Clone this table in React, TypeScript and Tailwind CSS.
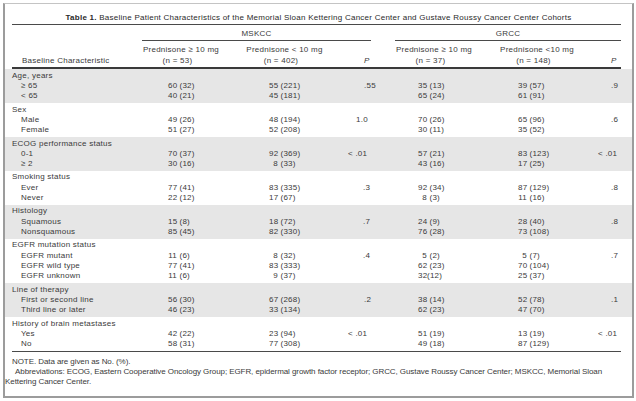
type Row = { name: string; v: string[] };
type Section = {
  label: string;
  shade: boolean;
  rows: Row[];
  p1: string;
  p1Pad: string;
  p2: string;
  p2Pad: string;
};

const sections: Section[] = [
  {
    label: "Age, years",
    shade: true,
    rows: [
      { name: "≥ 65", v: ["60 (32)", "55 (221)", "35 (13)", "39 (57)"] },
      { name: "< 65", v: ["40 (21)", "45 (181)", "65 (24)", "61 (91)"] },
    ],
    p1: ".55",
    p1Pad: "pl-[40px]",
    p2: ".9",
    p2Pad: "pl-[36px]",
  },
  {
    label: "Sex",
    shade: false,
    rows: [
      { name: "Male", v: ["49 (26)", "48 (194)", "70 (26)", "65 (96)"] },
      { name: "Female", v: ["51 (27)", "52 (208)", "30 (11)", "35 (52)"] },
    ],
    p1: "1.0",
    p1Pad: "pl-[32px]",
    p2: ".6",
    p2Pad: "pl-[36px]",
  },
  {
    label: "ECOG performance status",
    shade: true,
    rows: [
      { name: "0-1", v: ["70 (37)", "92 (369)", "57 (21)", "83 (123)"] },
      { name: "≥ 2", v: ["30 (16)", "8 (33)", "43 (16)", "17 (25)"] },
    ],
    p1: "< .01",
    p1Pad: "pl-[24px]",
    p2: "< .01",
    p2Pad: "pl-[23px]",
  },
  {
    label: "Smoking status",
    shade: false,
    rows: [
      { name: "Ever", v: ["77 (41)", "83 (335)", "92 (34)", "87 (129)"] },
      { name: "Never", v: ["22 (12)", "17 (67)", "8 (3)", "11 (16)"] },
    ],
    p1: ".3",
    p1Pad: "pl-[39px]",
    p2: ".8",
    p2Pad: "pl-[36px]",
  },
  {
    label: "Histology",
    shade: true,
    rows: [
      { name: "Squamous", v: ["15 (8)", "18 (72)", "24 (9)", "28 (40)"] },
      { name: "Nonsquamous", v: ["85 (45)", "82 (330)", "76 (28)", "73 (108)"] },
    ],
    p1: ".7",
    p1Pad: "pl-[39px]",
    p2: ".8",
    p2Pad: "pl-[36px]",
  },
  {
    label: "EGFR mutation status",
    shade: false,
    rows: [
      { name: "EGFR mutant", v: ["11 (6)", "8 (32)", "5 (2)", "5 (7)"] },
      { name: "EGFR wild type", v: ["77 (41)", "83 (333)", "62 (23)", "70 (104)"] },
      { name: "EGFR unknown", v: ["11 (6)", "9 (37)", "32(12)", "25 (37)"] },
    ],
    p1: ".4",
    p1Pad: "pl-[39px]",
    p2: ".7",
    p2Pad: "pl-[36px]",
  },
  {
    label: "Line of therapy",
    shade: true,
    rows: [
      { name: "First or second line", v: ["56 (30)", "67 (268)", "38 (14)", "52 (78)"] },
      { name: "Third line or later", v: ["46 (23)", "33 (134)", "62 (23)", "47 (70)"] },
    ],
    p1: ".2",
    p1Pad: "pl-[40px]",
    p2: ".1",
    p2Pad: "pl-[36px]",
  },
  {
    label: "History of brain metastases",
    shade: false,
    rows: [
      { name: "Yes", v: ["42 (22)", "23 (94)", "51 (19)", "13 (19)"] },
      { name: "No", v: ["58 (31)", "77 (308)", "49 (18)", "87 (129)"] },
    ],
    p1: "< .01",
    p1Pad: "pl-[24px]",
    p2: "< .01",
    p2Pad: "pl-[23px]",
  },
];

// count right-aligned so the parentheses line up
const Value = ({ text }: { text: string }) => {
  const i = text.indexOf("(");
  const count = text.slice(0, i).trimEnd();
  const spaced = text[i - 1] === " ";
  return (
    <span className="whitespace-pre">
      <span className="inline-block w-[9px] text-right">{count}</span>
      {spaced ? " " : ""}
      {text.slice(i)}
    </span>
  );
};

const Line = ({
  name,
  indent,
  v,
  p1,
  p1Pad,
  p2,
  p2Pad,
}: {
  name: string;
  indent: boolean;
  v?: string[];
  p1?: string;
  p1Pad?: string;
  p2?: string;
  p2Pad?: string;
}) => (
  <div className="flex h-[10.4px] items-center whitespace-nowrap">
    <div className={`w-[130px] ${indent ? "pl-[9px]" : ""}`}>{name}</div>
    <div className="w-[103px] pl-[26px]">{v && <Value text={v[0]} />}</div>
    <div className="w-[79px] pl-[24px]">{v && <Value text={v[1]} />}</div>
    <div className={`w-[71px] ${p1Pad ?? ""}`}>{p1}</div>
    <div className="w-[104px] pl-[23px]">{v && <Value text={v[2]} />}</div>
    <div className="w-[76px] pl-[19px]">{v && <Value text={v[3]} />}</div>
    <div className={`w-[46px] ${p2Pad ?? ""}`}>{p2}</div>
  </div>
);

const HeadCol = ({ top, n, w }: { top: string; n: string; w: string }) => (
  <div className={`${w} flex flex-col gap-[1px] text-center`}>
    <div className="h-[10px] leading-[10px]">{top}</div>
    <div className="h-[10px] pr-[7px] leading-[10px]">{n}</div>
  </div>
);

export default function App() {
  return (
    <div className="h-[401px] w-[636px] bg-white pl-[3px] pt-[3px] font-['Liberation_Sans',Arial,sans-serif] text-[8px] tracking-[0.25px] text-[#3a3a3a]">
      <div className="box-border h-[395px] w-[631px] border-b-2 border-l-2 border-r-2 border-t border-b-[#9c9c9c] border-l-[#9c9c9c] border-r-[#9c9c9c] border-t-[#c4c4c4]">
        <div className="pt-[9px] text-center leading-[10px] text-[#2a2a2a]">
          <span className="font-bold">Table 1.</span> Baseline Patient Characteristics of the Memorial Sloan
          Kettering Cancer Center and Gustave Roussy Cancer Center Cohorts
        </div>
        <div className="ml-[7px] mt-[1px] h-[1px] w-[609px] bg-[#4a4a4a]" />

        {/* spanners */}
        <div className="ml-[7px] mt-[4px] flex w-[609px]">
          <div className="w-[130px]" />
          <div className="w-[229px]">
            <div className="h-[10px] text-center leading-[10px]">MSKCC</div>
            <div className="mt-[1px] h-[1px] bg-[#4a4a4a]" />
          </div>
          <div className="w-[24px]" />
          <div className="w-[226px]">
            <div className="h-[10px] text-center leading-[10px]">GRCC</div>
            <div className="mt-[1px] h-[1px] bg-[#4a4a4a]" />
          </div>
        </div>

        {/* column heads */}
        <div className="ml-[7px] mt-[4px] flex w-[609px] whitespace-nowrap">
          <div className="flex w-[130px] flex-col justify-end pl-[10px]">
            <div className="h-[10px] leading-[10px]">Baseline Characteristic</div>
          </div>
          <div className="w-[103px]">
            <HeadCol w="w-[78px]" top="Prednisone ≥ 10 mg" n="(n = 53)" />
          </div>
          <HeadCol w="w-[79px]" top="Prednisone < 10 mg" n="(n = 402)" />
          <div className="flex w-[71px] flex-col justify-end pl-[40px]">
            <div className="h-[10px] italic leading-[10px]">P</div>
          </div>
          <div className="w-[104px]">
            <HeadCol w="w-[78px]" top="Prednisone ≥ 10 mg" n="(n = 37)" />
          </div>
          <HeadCol w="w-[76px]" top="Prednisone <10 mg" n="(n = 148)" />
          <div className="flex w-[46px] flex-col justify-end pl-[36px]">
            <div className="h-[10px] italic leading-[10px]">P</div>
          </div>
        </div>
        <div className="ml-[7px] mt-[1px] h-[2px] w-[609px] bg-[#3a3a3a]" />

        {/* body */}
        <div>
          {sections.map((s) => (
            <div
              key={s.label}
              className={`pb-[1.25px] pl-[7px] pt-[1.5px] ${s.shade ? "bg-[#e6e6e6]" : "bg-white"}`}
            >
              <Line name={s.label} indent={false} />
              {s.rows.map((r, i) => (
                <Line
                  key={r.name}
                  name={r.name}
                  indent
                  v={r.v}
                  p1={i === 0 ? s.p1 : undefined}
                  p1Pad={s.p1Pad}
                  p2={i === 0 ? s.p2 : undefined}
                  p2Pad={s.p2Pad}
                />
              ))}
            </div>
          ))}
        </div>
        <div className="ml-[7px] h-[1px] w-[609px] bg-[#4a4a4a]" />

        {/* notes */}
        <div className="mt-[5px] whitespace-nowrap leading-[10px] tracking-[-0.08px]">
          <div className="pl-[7px]">NOTE. Data are given as No. (%).</div>
          <div className="pl-[10px]">
            Abbreviations: ECOG, Eastern Cooperative Oncology Group; EGFR, epidermal growth factor receptor; GRCC,
            Gustave Roussy Cancer Center; MSKCC, Memorial Sloan
          </div>
          <div>Kettering Cancer Center.</div>
        </div>
      </div>
    </div>
  );
}
